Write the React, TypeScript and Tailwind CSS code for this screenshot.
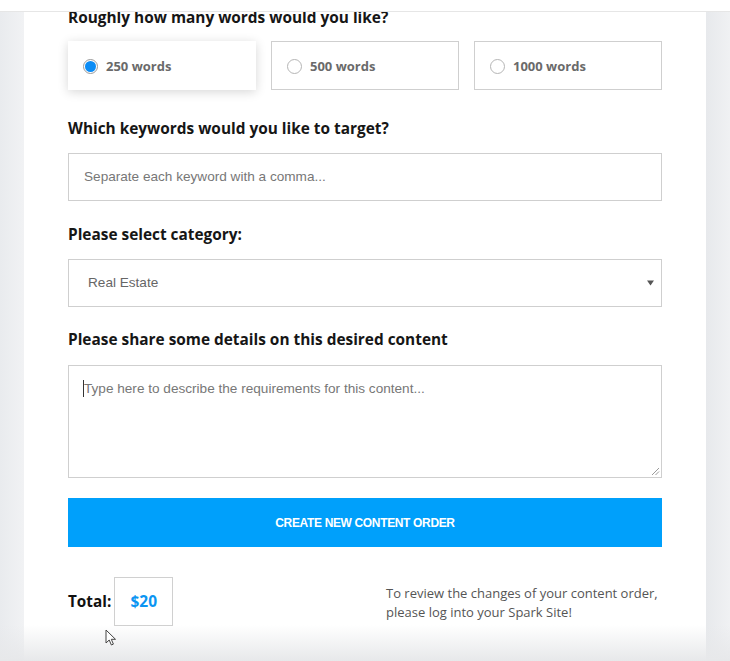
import React from "react";

const heading = "text-[15.4px] font-bold text-[#161616] leading-[22px] font-['Open_Sans',sans-serif]";

function Radio({ checked }: { checked?: boolean }) {
  return checked ? (
    <span className="flex h-[15px] w-[15px] items-center justify-center rounded-full border border-[#9a9a9a] bg-white">
      <span className="h-[11px] w-[11px] rounded-full bg-[#0b8cf5]" />
    </span>
  ) : (
    <span className="h-[15px] w-[15px] rounded-full border border-[#b5b5b5] bg-white" />
  );
}

export default function App() {
  const options = [
    { label: "250 words", checked: true },
    { label: "500 words" },
    { label: "1000 words" },
  ];

  return (
    <div className="relative h-[661px] w-full overflow-hidden bg-[#eceef1] font-['Open_Sans',sans-serif]">
      {/* Top header strip */}
      <div className="absolute left-0 right-0 top-0 z-10 h-[12px] border-b border-[#e6e6e6] bg-white" />

      <div className="flex h-full">
        <div className="w-[24px] bg-gradient-to-r from-[#e9ebee] to-[#f1f2f4]" />

        <div className="flex-1 bg-white px-[44px] pt-[7px]">
          <h2 className={heading}>Roughly how many words would you like?</h2>

          {/* Word count options */}
          <div className="mt-[12px] grid grid-cols-3 gap-[15px]">
            {options.map((o) => (
              <div
                key={o.label}
                className={
                  "flex h-[49px] items-center gap-[8px] pl-[15px] pt-[2px] " +
                  (o.checked
                    ? "shadow-[0_2px_10px_rgba(0,0,0,0.16)]"
                    : "border border-[#cfcfcf]")
                }
              >
                <Radio checked={o.checked} />
                <span className="text-[13px] font-bold text-[#6a6a6a]">{o.label}</span>
              </div>
            ))}
          </div>

          <h2 className={heading + " mt-[28px]"}>Which keywords would you like to target?</h2>
          <div className="mt-[13px] flex h-[48px] items-center border border-[#cfcfcf] pl-[15px] font-['Liberation_Sans',Arial,sans-serif] text-[13.6px] text-[#777]">
            Separate each keyword with a comma...
          </div>

          <h2 className={heading + " mt-[23px]"}>Please select category:</h2>
          <div className="mt-[13px] flex h-[48px] items-center justify-between border border-[#cfcfcf] pl-[19px] pr-[7px] font-['Liberation_Sans',Arial,sans-serif] text-[13.6px] text-[#666]">
            <span>Real Estate</span>
            <svg width="7" height="6" viewBox="0 0 7 6">
              <path d="M0 0.5h7L3.5 5.5z" fill="#555" />
            </svg>
          </div>

          <h2 className={heading + " mt-[22px]"}>Please share some details on this desired content</h2>
          <div className="relative mt-[14px] h-[113px] border border-[#cfcfcf] pl-[15px] pt-[13px] font-['Liberation_Sans',Arial,sans-serif] text-[13.6px] text-[#777]">
            <span className="absolute left-[14px] top-[14px] h-[17px] w-px bg-[#333]" />
            <span>Type here to describe the requirements for this content...</span>
            <svg className="absolute bottom-[1px] right-[1px]" width="9" height="9" viewBox="0 0 9 9">
              <path d="M8 1L1 8M8 4.5L4.5 8" stroke="#9a9a9a" strokeWidth="1" />
            </svg>
          </div>

          <button className="mt-[20px] flex h-[49px] w-full items-center justify-center bg-[#00a0fb] font-['Liberation_Sans',Arial,sans-serif] text-[12px] font-bold tracking-[-0.35px] text-white">
            CREATE NEW CONTENT ORDER
          </button>

          {/* Total row */}
          <div className="mt-[30px] flex items-center">
            <span className="text-[15.3px] font-bold text-[#111]">Total:</span>
            <div className="ml-[3px] flex h-[49px] w-[59px] items-center justify-center border border-[#d0d0d0] text-[15.5px] font-bold text-[#0b95f2]">
              $20
            </div>
            <p className="ml-auto w-[276px] pt-[2px] text-[13px] leading-[19px] text-[#555]">
              To review the changes of your content order, please log into your Spark Site!
            </p>
          </div>
        </div>

        <div className="w-[24px] bg-gradient-to-r from-[#e7e9ec] to-[#f0f1f3]" />
      </div>

      {/* Bottom fade */}
      <div className="pointer-events-none absolute bottom-0 left-0 right-0 h-[36px] bg-gradient-to-b from-white/0 to-[#e7e8ea]" />

      {/* Mouse cursor */}
      <svg className="absolute left-[105px] top-[629px]" width="12" height="18" viewBox="0 0 12 18">
        <path d="M1 1v13l3.2-3 2.2 5 2-0.9-2.1-4.8H10.5z" fill="#fff" stroke="#444" strokeWidth="1" strokeLinejoin="round" />
      </svg>
    </div>
  );
}
